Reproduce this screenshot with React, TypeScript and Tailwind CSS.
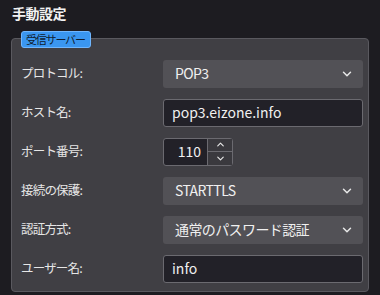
import { ChevronDown, ChevronUp } from "lucide-react"

const font = { fontFamily: '"Noto Sans CJK JP", "Noto Sans", sans-serif' }

function Select({ value }: { value: string }) {
  return (
    <div className="flex h-[28px] w-[200px] items-center justify-between rounded-[3px] bg-[#525156] pl-[12px] pr-[9px] text-[14px] tracking-[-0.6px] text-[#f0f0f0]">
      <span>{value}</span>
      <ChevronDown className="h-[14px] w-[14px] text-[#e8e8e8]" strokeWidth={2.5} />
    </div>
  )
}

function Input({ value }: { value: string }) {
  return (
    <div className="flex h-[28px] w-[200px] items-center rounded-[3px] border border-[#6b6a70] bg-[#222128] px-[8px] text-[14px] text-[#f0f0f0]">
      {value}
    </div>
  )
}

export default function App() {
  const rows = [
    { label: "プロトコル:", kind: "select", value: "POP3" },
    { label: "ホスト名:", kind: "input", value: "pop3.eizone.info" },
    { label: "ポート番号:", kind: "port", value: "110" },
    { label: "接続の保護:", kind: "select", value: "STARTTLS" },
    { label: "認証方式:", kind: "select", value: "通常のパスワード認証" },
    { label: "ユーザー名:", kind: "input", value: "info" },
  ]

  return (
    <div className="h-[295px] w-[380px] overflow-hidden bg-[#1d1c21]" style={font}>
      <div className="px-[12px] pt-[3px] text-[14px] font-bold leading-[20px] tracking-[-0.5px] text-[#f2f2f2]">手動設定</div>

      <div className="relative mx-[11px] mt-[15px] h-[254px] rounded-[4px] border border-[#5a595f] bg-[#403f44]">
        {/* legend badge */}
        <div className="absolute left-[9px] top-[-8px] flex h-[17px] items-center rounded-[3px] border border-[#6fb6ff] bg-[#3a96f0] pl-[4px] pr-[5px] text-[11px] tracking-[-1.2px] text-[#0f1c2e]">
          受信サーバー
        </div>

        <div className="flex flex-col pt-[15px]">
          {rows.map((row, i) => (
            <div key={i} className="flex h-[39px] items-center pl-[9px]">
              <div className="w-[142px] text-[12.5px] tracking-[-0.8px] text-[#e6e6e6]">{row.label}</div>
              {row.kind === "select" && <Select value={row.value} />}
              {row.kind === "input" && <Input value={row.value} />}
              {row.kind === "port" && (
                <div className="flex h-[28px] w-[70px] rounded-[3px] border border-[#6b6a70] bg-[#222128]">
                  <div className="flex flex-1 items-center justify-end pr-[6px] text-[14px] text-[#f0f0f0]">{row.value}</div>
                  <div className="flex w-[25px] flex-col border-l border-[#6b6a70] bg-[#3a393e]">
                    <div className="flex flex-1 items-center justify-center border-b border-[#6b6a70]">
                      <ChevronUp className="h-[11px] w-[11px] text-[#e8e8e8]" strokeWidth={2.5} />
                    </div>
                    <div className="flex flex-1 items-center justify-center">
                      <ChevronDown className="h-[11px] w-[11px] text-[#e8e8e8]" strokeWidth={2.5} />
                    </div>
                  </div>
                </div>
              )}
            </div>
          ))}
        </div>
      </div>
    </div>
  )
}
